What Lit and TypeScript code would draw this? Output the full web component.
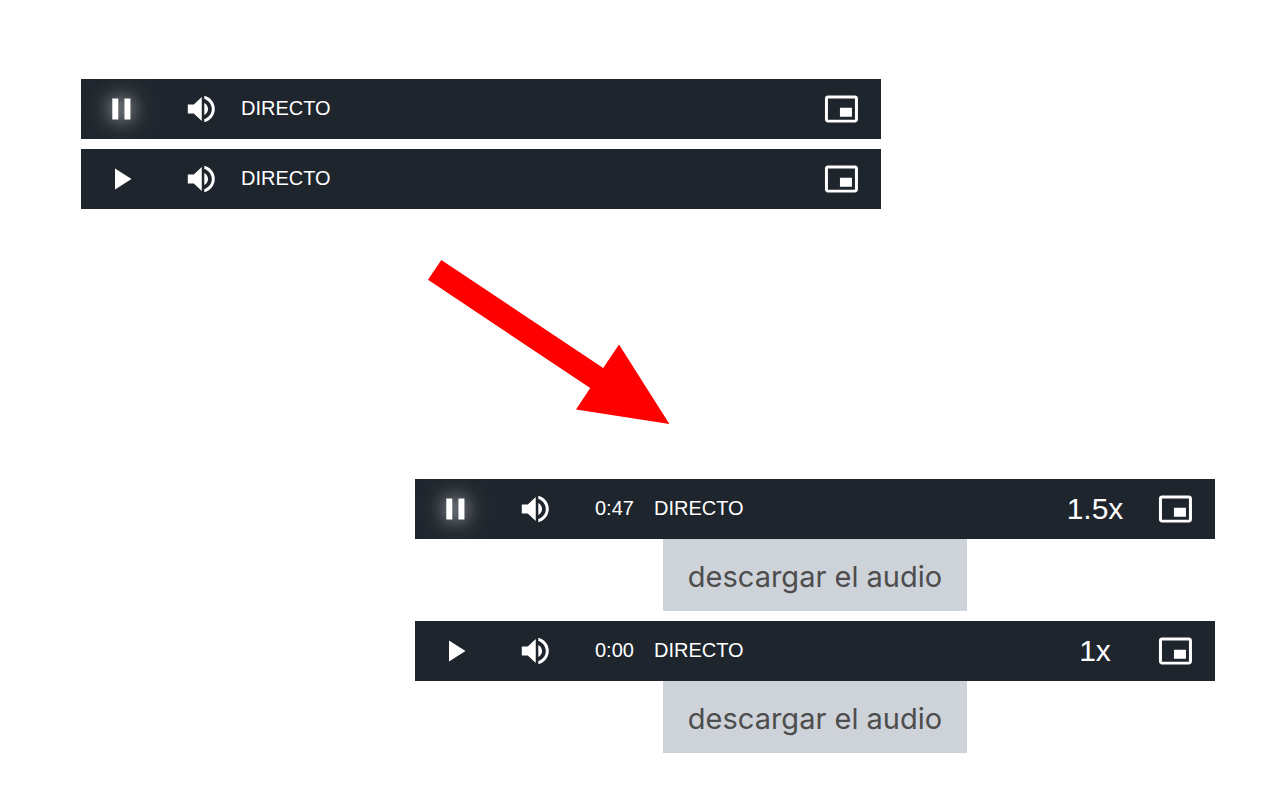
import { LitElement, html, css, svg, nothing } from "lit";
import { customElement, property } from "lit/decorators.js";

const ICONS = {
  play: "M8 5v14l11-7z",
  pause: "M6.2 19h4V5h-4v14zm8.1-14v14h4V5h-4z",
  volume:
    "M3.2 9v6h4l5.3 5V4L7.2 9h-4zm13.5 3c0-1.77-1.02-3.29-2.5-4.03v8.05c1.48-.73 2.5-2.25 2.5-4.02zM14.2 3.23v2.06c2.89.86 5 3.54 5 6.71s-2.11 5.85-5 6.71v2.06c4.01-.91 7-4.49 7-8.77s-2.99-7.86-7-8.77z",
  pip: "M19.3 11.1h-8v6h8v-6zm4 8V4.98C23.3 3.88 22.4 3 21.3 3h-18c-1.1 0-2 .88-2 1.98V19c0 1.1.9 2 2 2h18c1.1 0 2-.9 2-2zm-2 .02h-18V4.97h18v14.05z",
};

const icon = (name: keyof typeof ICONS) => html`
  <svg class="icon" viewBox="0 0 24 24" aria-hidden="true">${svg`<path d=${ICONS[name]}></path>`}</svg>
`;

@customElement("audio-bar")
export class AudioBar extends LitElement {
  @property({ type: Boolean }) playing = false;
  @property() time = "";
  @property() rate = "";

  static styles = css`
    :host {
      display: block;
      font-family: "Liberation Sans", Arial, sans-serif;
    }
    .bar {
      display: flex;
      height: 60px;
      background: #1e252c;
      color: #fff;
      font-size: 20px;
      line-height: 58px;
    }
    .control {
      display: flex;
      align-items: center;
      justify-content: center;
      width: 80px;
      height: 60px;
      padding: 0;
      border: 0;
      background: none;
      color: inherit;
      font-family: inherit;
      font-size: 30px;
      line-height: 60px;
      cursor: pointer;
    }
    .icon {
      width: 36px;
      height: 36px;
      fill: currentColor;
      overflow: visible;
    }
    .glow .icon {
      filter: drop-shadow(0 0 9px rgba(255, 255, 255, 0.8)) drop-shadow(0 0 18px rgba(255, 255, 255, 0.3));
    }
    .time {
      padding: 0 20px;
    }
    .live {
      flex: 1;
    }
    .download {
      display: block;
      width: fit-content;
      margin: 0 auto;
      padding: 4px 25px 0;
      background: #ced3da;
      color: #4d4d4d;
      font-family: Inter, sans-serif;
      font-size: 29px;
      line-height: 68px;
      text-decoration: none;
    }
  `;

  render() {
    return html`
      <div class="bar">
        <button
          class=${this.playing ? "control glow" : "control"}
          aria-label=${this.playing ? "Pausa" : "Reproducir"}
          @click=${() => (this.playing = !this.playing)}
        >
          ${icon(this.playing ? "pause" : "play")}
        </button>
        <button class="control" aria-label="Volumen">${icon("volume")}</button>
        ${this.time ? html`<span class="time">${this.time}</span>` : nothing}
        <span class="live">DIRECTO</span>
        ${this.rate ? html`<button class="control">${this.rate}</button>` : nothing}
        <button class="control" aria-label="Imagen en imagen">${icon("pip")}</button>
      </div>
      ${this.rate ? html`<a class="download" href="#">descargar el audio</a>` : nothing}
    `;
  }
}

@customElement("app-root")
export class AppRoot extends LitElement {
  static styles = css`
    :host {
      display: block;
      box-sizing: border-box;
      min-height: 100vh;
      padding: 79px 65px 40px 81px;
      background: #fff;
    }
    .page {
      display: flex;
      flex-direction: column;
    }
    .group {
      display: flex;
      flex-direction: column;
      gap: 10px;
      width: 100%;
      max-width: 800px;
    }
    .after {
      align-self: flex-end;
    }
    .arrow {
      width: 242px;
      height: 165px;
      margin: 51px 0 54px 347px;
      fill: #f00;
    }
  `;

  render() {
    return html`
      <main class="page">
        <section class="group">
          <audio-bar playing></audio-bar>
          <audio-bar></audio-bar>
        </section>
        <svg class="arrow" viewBox="0 0 242 165" aria-hidden="true">
          <path d="M13.3 0L175.2 107.9L191 84.4L241.4 164L148 149.5L162.2 128L0 19.8Z"></path>
        </svg>
        <section class="group after">
          <audio-bar playing time="0:47" rate="1.5x"></audio-bar>
          <audio-bar time="0:00" rate="1x"></audio-bar>
        </section>
      </main>
    `;
  }
}
